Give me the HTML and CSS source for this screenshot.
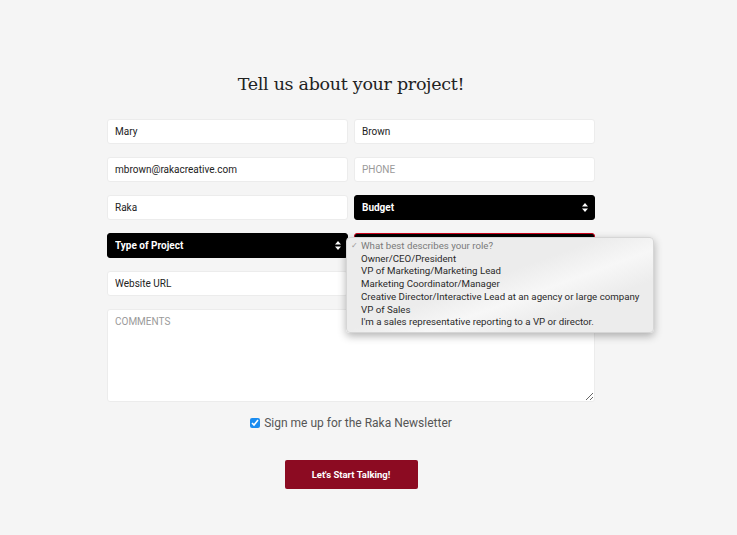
FILE: index.html
```html
<!DOCTYPE html>
<html lang="en">
<head>
    <meta charset="UTF-8">
    <meta name="viewport" content="width=device-width, initial-scale=1.0">
    <title>Tell us about your project</title>
    <link rel="stylesheet" href="styles.css">
</head>
<body>
    <div class="contact">
        <h1>Tell us about your project!</h1>

        <form class="project-form" onsubmit="return false;">
            <input type="text" name="first" value="Mary">
            <input type="text" name="last" value="Brown">
            <input type="email" name="email" value="mbrown@rakacreative.com">
            <input type="tel" name="phone" placeholder="PHONE">
            <input type="text" name="company" value="Raka">

            <div class="select">
                <select name="budget">
                    <option>Budget</option>
                </select>
                <svg class="arrows" width="6" height="9" viewBox="0 0 6 9"><path d="M3 0L6 3.5H0z M3 9L0 5.5H6z" fill="#fff"/></svg>
            </div>

            <div class="select">
                <select name="type">
                    <option>Type of Project</option>
                </select>
                <svg class="arrows" width="6" height="9" viewBox="0 0 6 9"><path d="M3 0L6 3.5H0z M3 9L0 5.5H6z" fill="#fff"/></svg>
            </div>

            <div class="select role">
                <select name="role">
                    <option>What best describes your role?</option>
                </select>

                <!-- open option list -->
                <ul class="menu">
                    <li class="picked"><span class="tick">&#10003;</span>What best describes your role?</li>
                    <li>Owner/CEO/President</li>
                    <li>VP of Marketing/Marketing Lead</li>
                    <li>Marketing Coordinator/Manager</li>
                    <li>Creative Director/Interactive Lead at an agency or large company</li>
                    <li>VP of Sales</li>
                    <li>I'm a sales representative reporting to a VP or director.</li>
                </ul>
            </div>

            <input type="text" name="url" value="Website URL">
            <div></div>

            <textarea name="comments" placeholder="COMMENTS"></textarea>

            <label class="newsletter">
                <input type="checkbox" checked> Sign me up for the Raka Newsletter
            </label>

            <button class="submit" type="submit">Let's Start Talking!</button>
        </form>
    </div>
</body>
</html>
```

FILE: styles.css
```css
* {
    margin: 0;
    padding: 0;
    box-sizing: border-box;
}

body {
    font-family: Roboto, 'Liberation Sans', Arial, sans-serif;
    background: #f5f5f5;
    color: #333;
}

.contact {
    width: 488px;
    margin-left: 107px;
    padding-top: 74px;
}

/* Title */
h1 {
    font-family: 'DejaVu Serif', 'Liberation Serif', serif;
    font-size: 17.5px;
    font-weight: normal;
    color: #222;
    text-align: center;
    letter-spacing: -0.3px;
    margin-bottom: 25px;
}

/* Form grid */
.project-form {
    display: grid;
    grid-template-columns: 1fr 1fr;
    column-gap: 6px;
    row-gap: 13px;
}

.project-form input[type="text"],
.project-form input[type="email"],
.project-form input[type="tel"],
.project-form textarea {
    height: 25px;
    padding: 0 7px;
    background: #fff;
    border: 1px solid #ececec;
    border-radius: 3px;
    font-family: Roboto, sans-serif;
    font-size: 10px;
    color: #222;
    outline: none;
}

.project-form ::placeholder {
    color: #9a9a9a;
    opacity: 1;
}

/* Selects */
.select {
    position: relative;
    height: 25px;
}

.select select {
    appearance: none;
    -webkit-appearance: none;
    width: 100%;
    height: 100%;
    padding: 0 7px;
    background: #000;
    color: #fff;
    border: 1px solid #000;
    border-radius: 3px;
    font-family: Roboto, sans-serif;
    font-size: 10px;
    font-weight: bold;
    outline: none;
}

.select .arrows {
    position: absolute;
    right: 7px;
    top: 8px;
    pointer-events: none;
}

.select.role select {
    border-color: #d0021b;
}

/* Open dropdown list */
.menu {
    position: absolute;
    top: 4px;
    left: -8px;
    width: 308px;
    padding: 2px 0 3px;
    list-style: none;
    background: linear-gradient(160deg, #ececec 0%, #ececec 45%, #f7f7f7 60%, #ececec 75%);
    border: 1px solid #d6d6d6;
    border-radius: 4px;
    box-shadow: 0 3px 8px rgba(0, 0, 0, 0.3);
    z-index: 5;
}

.menu li {
    padding-left: 14px;
    font-family: Roboto, sans-serif;
    font-size: 9.7px;
    line-height: 12.7px;
    color: #2a2a2a;
    white-space: nowrap;
}

.menu li.picked {
    position: relative;
    color: #7a7a7a;
}

.menu .tick {
    position: absolute;
    left: 4px;
    font-size: 8px;
    color: #999;
}

/* Comments */
.project-form textarea {
    grid-column: 1 / 3;
    height: 93px;
    padding-top: 6px;
    resize: vertical;
}

/* Newsletter */
.newsletter {
    grid-column: 1 / 3;
    display: flex;
    justify-content: center;
    align-items: center;
    gap: 4px;
    margin-top: 1px;
    font-size: 12px;
    color: #555;
}

.newsletter input {
    width: 10px;
    height: 10px;
    accent-color: #1a8cf0;
}

/* Submit button */
button.submit {
    grid-column: 1 / 3;
    justify-self: center;
    width: 133px;
    height: 29px;
    margin-top: 17px;
    background: #8c0b22;
    color: #fff;
    border: none;
    border-radius: 2px;
    font-family: Roboto, sans-serif;
    font-size: 9.5px;
    font-weight: bold;
    cursor: pointer;
}
```
